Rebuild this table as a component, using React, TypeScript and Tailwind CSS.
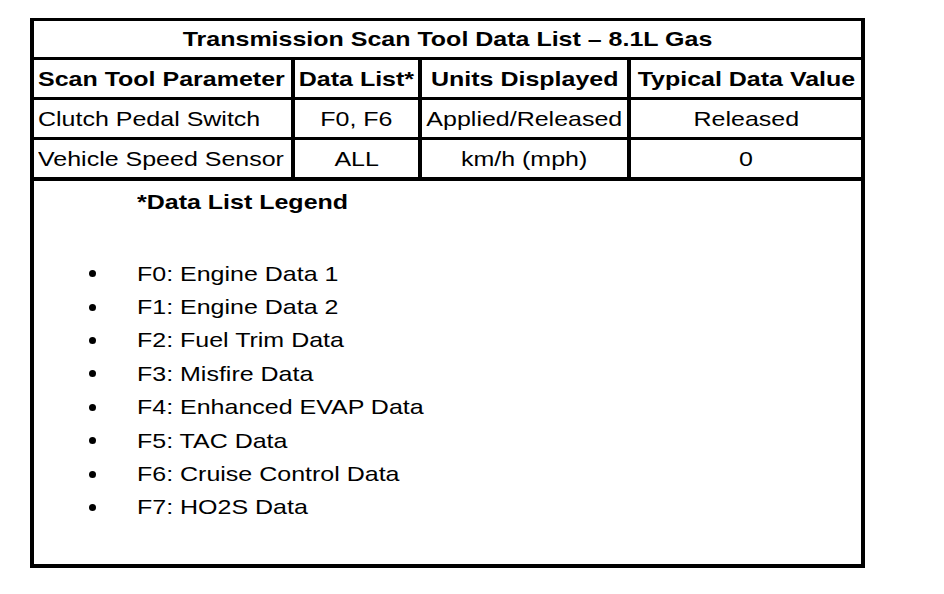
const font = { fontFamily: '"Liberation Sans", Arial, sans-serif' };

// the source image is stretched a little wide, so text gets a horizontal scale
const txt = "inline-block whitespace-nowrap text-[21px] leading-6 scale-x-[1.19]";

const headers = ["Scan Tool Parameter", "Data List*", "Units Displayed", "Typical Data Value"];

const rows = [
  ["Clutch Pedal Switch", "F0, F6", "Applied/Released", "Released"],
  ["Vehicle Speed Sensor", "ALL", "km/h (mph)", "0"],
];

const legend = [
  "F0: Engine Data 1",
  "F1: Engine Data 2",
  "F2: Fuel Trim Data",
  "F3: Misfire Data",
  "F4: Enhanced EVAP Data",
  "F5: TAC Data",
  "F6: Cruise Control Data",
  "F7: HO2S Data",
];

function Cell({ text, bold, first }: { text: string; bold?: boolean; first?: boolean }) {
  return (
    <div
      className={`flex items-center bg-white ${first ? "justify-start pl-[4px]" : "justify-center"}`}
    >
      <span className={`${txt} ${first ? "origin-left" : "origin-center"} ${bold ? "font-bold" : ""}`}>
        {text}
      </span>
    </div>
  );
}

export default function App() {
  return (
    <div className="min-h-[594px] w-[944px] bg-white pt-[18px] pl-[30px] text-black" style={font}>
      <div className="flex h-[550px] w-[835px] flex-col border-4 border-t-[3px] border-black">
        {/* TABLE */}
        <div className="grid grid-cols-[257px_123px_205px_230px] grid-rows-[36px_37px_37px_37px] gap-x-[4px] gap-y-[3px] bg-black">
          <div className="col-span-4 flex items-center justify-center bg-white">
            <span className={`${txt} origin-center font-bold`}>
              Transmission Scan Tool Data List – 8.1L Gas
            </span>
          </div>
          {headers.map((h, i) => (
            <Cell key={h} text={h} bold first={i === 0} />
          ))}
          {rows.map((r) =>
            r.map((c, i) => <Cell key={r[0] + i} text={c} first={i === 0} />)
          )}
        </div>

        {/* LEGEND */}
        <div className="flex-1 border-t-[4px] border-black bg-white">
          <div className="mt-[9px] pl-[103px]">
            <span className={`${txt} origin-left font-bold`}>*Data List Legend</span>
          </div>
          <ul className="mt-[41px] pl-[55px]">
            {legend.map((item) => (
              <li key={item} className="flex h-[33.4px] items-center">
                <span className="h-[7px] w-[7px] rounded-full bg-black" />
                <span className={`${txt} ml-[41px] origin-left`}>{item}</span>
              </li>
            ))}
          </ul>
        </div>
      </div>
    </div>
  );
}
